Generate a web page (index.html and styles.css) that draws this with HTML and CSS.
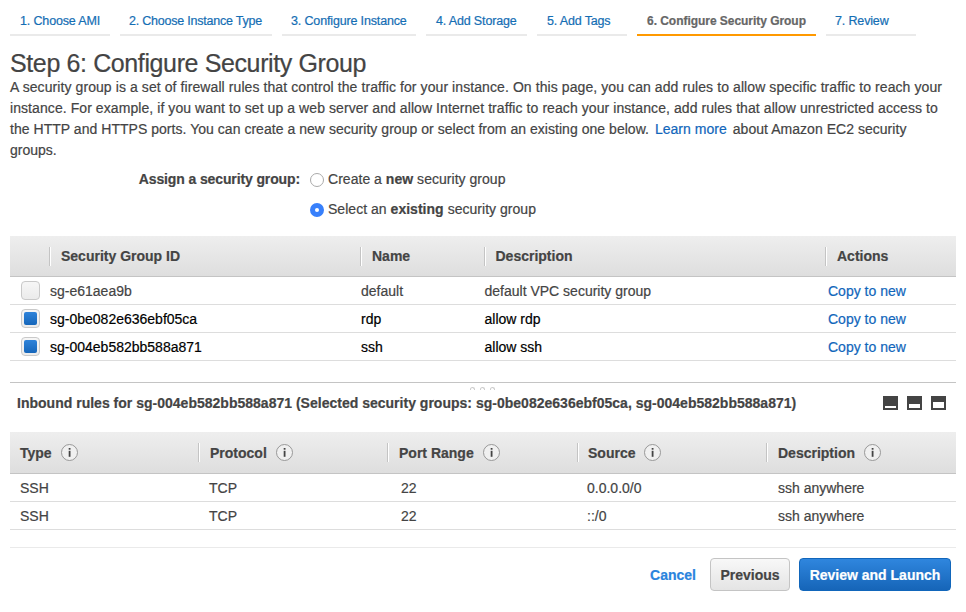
FILE: index.html
```html
<!DOCTYPE html>
<html lang="en">
<head>
<meta charset="utf-8">
<title>Step 6: Configure Security Group</title>
<link rel="stylesheet" href="styles.css">
</head>
<body>
<svg class="defs" width="0" height="0" aria-hidden="true">
  <symbol id="info" viewBox="0 0 17 17">
    <circle cx="8.5" cy="8.5" r="8" fill="#f0f0f0" stroke="#8e8e8e" stroke-width=".9"/>
    <rect x="7.7" y="4" width="1.8" height="1.7" fill="#444"/>
    <rect x="7.7" y="6.8" width="1.8" height="6" fill="#444"/>
  </symbol>
</svg>
<nav class="steps">
  <a class="step s1"><span>1. Choose AMI</span></a>
  <a class="step s2"><span>2. Choose Instance Type</span></a>
  <a class="step s3"><span>3. Configure Instance</span></a>
  <a class="step s4"><span>4. Add Storage</span></a>
  <a class="step s5"><span>5. Add Tags</span></a>
  <a class="step s6 current"><span>6. Configure Security Group</span></a>
  <a class="step s7"><span>7. Review</span></a>
</nav>
<main>
  <h1>Step 6: Configure Security Group</h1>
  <p class="intro">
    <span class="l1">A security group is a set of firewall rules that control the traffic for your instance. On this page, you can add rules to allow specific traffic to reach your</span><br>
    <span class="l2">instance. For example, if you want to set up a web server and allow Internet traffic to reach your instance, add rules that allow unrestricted access to</span><br>
    <span class="l3">the HTTP and HTTPS ports. You can create a new security group or select from an existing one below. <a class="more">Learn more</a> about Amazon EC2 security</span><br>
    <span>groups.</span>
  </p>
  <section class="assign">
    <b class="label">Assign a security group:</b>
    <div class="options">
      <label><i class="radio"></i><span>Create a <b>new</b> security group</span></label>
      <label><i class="radio on"></i><span>Select an <b>existing</b> security group</span></label>
    </div>
  </section>

  <section class="groups">
    <div class="head row"><div></div><div>Security Group ID</div><div>Name</div><div>Description</div><div>Actions</div></div>
    <div class="row"><div><i class="check"></i></div><div>sg-e61aea9b</div><div>default</div><div>default VPC security group</div><div><a>Copy to new</a></div></div>
    <div class="row selected"><div><i class="check on"></i></div><div>sg-0be082e636ebf05ca</div><div>rdp</div><div>allow rdp</div><div><a>Copy to new</a></div></div>
    <div class="row selected"><div><i class="check on"></i></div><div>sg-004eb582bb588a871</div><div>ssh</div><div>allow ssh</div><div><a>Copy to new</a></div></div>
  </section>

  <div class="splitter"><i></i><i></i><i></i></div>
  <div class="panel-title">
    <b>Inbound rules for sg-004eb582bb588a871 (Selected security groups: sg-0be082e636ebf05ca, sg-004eb582bb588a871)</b>
    <div class="sizes"><i class="small"></i><i class="medium"></i><i class="large"></i></div>
  </div>

  <section class="rules">
    <div class="head row">
      <div>Type<svg><use href="#info"/></svg></div>
      <div>Protocol<svg><use href="#info"/></svg></div>
      <div>Port Range<svg><use href="#info"/></svg></div>
      <div>Source<svg><use href="#info"/></svg></div>
      <div>Description<svg><use href="#info"/></svg></div>
    </div>
    <div class="row"><div>SSH</div><div>TCP</div><div>22</div><div>0.0.0.0/0</div><div>ssh anywhere</div></div>
    <div class="row"><div>SSH</div><div>TCP</div><div>22</div><div>::/0</div><div>ssh anywhere</div></div>
  </section>
</main>
<footer>
  <a class="cancel">Cancel</a>
  <button class="btn">Previous</button>
  <button class="btn primary">Review and Launch</button>
</footer>
</body>
</html>
```
FILE: styles.css
```css
* { box-sizing: border-box; }
body { margin: 0; padding: 0 10px; height: 612px; overflow: hidden; background: #fff; color: #444; font: 14px/21px "Liberation Sans", Arial, sans-serif; -webkit-text-stroke: .2px; }
.defs { display: block; height: 0; }
a { color: #1166bb; }

.steps { display: flex; gap: 10px; height: 36px; font-size: 12.5px; letter-spacing: -.15px; }
.step { height: 36px; padding: 11px 0 0 10px; border-bottom: 2px solid #eaeaea; white-space: nowrap; color: #146eb4; }
.s1 { width: 100px; }
.s2 { width: 152px; padding-left: 9px; letter-spacing: -.22px; }
.s3 { width: 134px; padding-left: 9px; }
.s4 { width: 101px; }
.s5 { width: 90px; }
.s6 { width: 179px; }
.s7 { width: 90px; padding-left: 9px; }
.step.current { border-color: #f90; color: #666; font-weight: bold; font-size: 12px; letter-spacing: -.04px; }

h1 { margin: 12px 0 0; font-size: 25px; line-height: 30px; font-weight: normal; letter-spacing: -.38px; white-space: nowrap; }
.intro { margin: -1px 0 0; height: 84px; white-space: nowrap; }
.l1 { letter-spacing: .085px; }
.l2 { letter-spacing: .075px; }
.l3 { letter-spacing: .035px; }
.more { margin: 0 2px; }

.assign { display: flex; gap: 10px; margin-top: 8px; height: 67px; }
.label { width: 290px; text-align: right; letter-spacing: -.12px; }
.options { letter-spacing: .03px; }
.options label { display: flex; align-items: center; gap: 4px; height: 21px; margin-bottom: 9px; }
.radio { width: 14px; height: 14px; margin-top: 1px; border: 1px solid #aaa; border-radius: 50%; background: #fff; }
.radio.on { border: 5px solid #3880fb; }

.row { display: grid; height: 28px; border-bottom: 1px solid #ddd; line-height: 29px; white-space: nowrap; }
.head { height: 41px; border-bottom: 1px solid #c4c4c4; background: linear-gradient(#eee, #dedede); font-weight: bold; align-items: center; }
.head > div { display: flex; align-items: center; height: 19px; line-height: 19px; padding-left: 10px; }
.head > div + div { border-left: 1px solid #c4c4c4; box-shadow: inset 1px 0 #fff; }
.groups .row { grid-template-columns: 39px 311px 124px 341px 1fr; }
.groups .row:not(.head) > div { padding-left: 1px; }
.groups .row:not(.head) > div:nth-child(4) { padding-left: .5px; }
.groups .row:not(.head) > div:last-child { padding-left: 3px; }
.groups .head > div { padding-left: 11px; }
.groups .head > div:nth-child(4) { padding-left: 10.5px; }
.groups .row:not(.head) > div:first-child { padding: 4px 0 0 11px; }
.selected { color: #000; }
.check { display: flex; width: 19px; height: 19px; border: 1px solid #c9c9c9; border-radius: 4px; background: linear-gradient(#f6f6f6, #ebebeb); }
.check.on::after { content: ""; width: 13px; height: 13px; margin: 2px; border-radius: 2px; background: linear-gradient(#2f83da, #1566ba); }

.splitter { display: flex; justify-content: center; gap: 5px; height: 10px; margin-top: 21px; padding: 4px 2px 0 0; border-top: 1px solid #c4c4c4; }
.splitter i { width: 5px; height: 3px; border: 1px solid #ccc; border-bottom: 0; border-radius: 3px 3px 0 0; }
.panel-title { display: flex; justify-content: space-between; height: 40px; padding: 1px 10px 0 7px; }
.panel-title b { white-space: nowrap; letter-spacing: .01px; }
.sizes { display: flex; gap: 9px; padding-top: 3px; }
.sizes i { width: 15px; height: 14px; border: 2px solid #444; background: #fff; }
.sizes .small { border-top-width: 10px; }
.sizes .medium { border-top-width: 8px; }
.sizes .large { border-top-width: 6px; }

.rules .row { grid-template-columns: 188px 189px 190px 189px 1fr; }
.rules .head { height: 42px; }
.rules .row:not(.head) > div { padding-left: 11px; }
.rules .row:not(.head) > div:first-child { padding-left: 10px; }
.rules .row:not(.head) > div:nth-child(3) { padding-left: 14px; }
.rules .row:not(.head) > div:nth-child(4) { padding-left: 10px; }
.rules .row:not(.head) > div:last-child { padding-left: 12px; }
.rules .head > div { padding-top: 1px; line-height: 20px; }
.rules .head > div + div { padding-left: 11px; }
.rules .head > div:nth-child(4) { padding-left: 10px; }
.rules svg { width: 17px; height: 17px; margin: -1px 0 0 9px; }

footer { display: flex; justify-content: flex-end; align-items: flex-start; height: 60px; margin-top: 17px; padding: 10px 5px 0 0; border-top: 1px solid #eaeaea; font-weight: bold; }
.cancel { color: #2a84dd; padding-top: 7px; margin-right: 14px; }
.btn { width: 80px; height: 33px; padding: 1px 0 0; border: 1px solid #c4c4c4; border-radius: 4px; background: linear-gradient(#f8f8f8, #e4e4e4); color: #444; font: bold 14px/21px "Liberation Sans", Arial, sans-serif; white-space: nowrap; }
.primary { width: 152px; margin-left: 9px; border-color: #1166bb; background: linear-gradient(#2f86de, #1665b8); color: #fff; }
```
